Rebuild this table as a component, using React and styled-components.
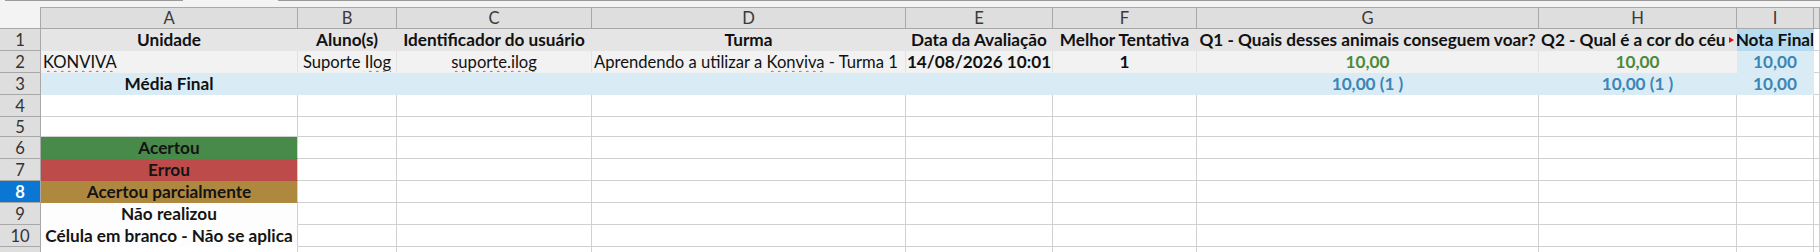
import React from "react";
import styled, { createGlobalStyle } from "styled-components";

const GlobalStyle = createGlobalStyle`
  html, body {
    margin: 0;
    padding: 0;
    background: #ffffff;
  }
`;

const COLS = [41, 257, 99, 195, 314, 147, 144, 342, 198, 77];
const ROWS = [22, 22, 22, 22, 22, 20, 22, 22, 22, 22, 22, 22];

const GRID = "#d0d0d0";
const HEAD_LINE = "#a8a8a8";
const FONT = `"Lato", "Liberation Sans", sans-serif`;

const Sheet = styled.div`
  width: 1820px;
  height: 252px;
  overflow: hidden;
  background: #ffffff;
  font-family: ${FONT};
  font-size: 16.6px;
  color: #111;
`;

const TopStrip = styled.div`
  height: 7px;
  background: #f3f3f3;
  display: grid;
  grid-template-columns: 5px 178px 95px 1fr;
`;

const StripLine = styled.div`
  height: 1px;
  background: ${(p) => (p.$on ? "#9a9a9a" : "transparent")};
`;

const Grid = styled.div`
  display: grid;
  grid-template-columns: ${COLS.map((c) => c + "px").join(" ")} 1fr;
  grid-template-rows: ${ROWS.map((r) => r + "px").join(" ")};
`;

const Corner = styled.div`
  background: #f3f3f3;
  border-right: 1px solid ${HEAD_LINE};
  border-bottom: 1px solid ${HEAD_LINE};
`;

const ColHead = styled.div`
  box-sizing: border-box;
  background: #dedede;
  border-top: 1px solid ${HEAD_LINE};
  border-right: 1px solid ${HEAD_LINE};
  border-bottom: 1px solid ${HEAD_LINE};
  display: flex;
  align-items: center;
  justify-content: center;
  color: #3a3a3a;
  font-size: 16.6px;
`;

const RowHead = styled.div`
  box-sizing: border-box;
  background: ${(p) => (p.$active ? "#0a77d4" : "#dedede")};
  color: ${(p) => (p.$active ? "#ffffff" : "#333333")};
  font-weight: ${(p) => (p.$active ? 700 : 400)};
  border-right: 1px solid ${HEAD_LINE};
  border-bottom: 1px solid ${HEAD_LINE};
  display: flex;
  align-items: center;
  justify-content: center;
  font-size: 16.6px;
`;

const Cell = styled.div`
  box-sizing: border-box;
  min-width: 0;
  background: ${(p) => p.$bg || "#ffffff"};
  border-right: 1px solid ${(p) => p.$vline || GRID};
  border-bottom: 1px solid ${(p) => p.$hline || GRID};
  display: flex;
  align-items: center;
  justify-content: ${(p) =>
    p.$align === "left" ? "flex-start" : p.$align === "right" ? "flex-end" : "center"};
  padding: 0 2px;
  overflow: hidden;
  white-space: nowrap;
  font-weight: ${(p) => (p.$bold ? 700 : 400)};
  font-size: ${(p) => (p.$bold ? "17.2px" : "16.6px")};
  color: ${(p) => p.$color || "#111111"};
`;

const Spell = styled.span`
  text-decoration-line: underline;
  text-decoration-style: wavy;
  text-decoration-color: #e8413c;
  text-decoration-thickness: 1.2px;
  text-underline-offset: 2px;
  text-decoration-skip-ink: none;
`;

const Label = styled.span`
  flex: 1;
  min-width: 0;
`;

// red marker drawn when a text runs past the cell edge
const ClipMark = styled.span`
  flex: none;
  width: 0;
  height: 0;
  margin-left: 2px;
  border-top: 3.5px solid transparent;
  border-bottom: 3.5px solid transparent;
  border-left: 5px solid #e01010;
`;

const GREEN = "#4b8a37";
const BLUE = "#3a86b6";
const HEAD_BG = "#e5e5e5";
const ROW2_BG = "#f2f2f2";
const SKY = "#d9ebf5";
const SKY_HEAD = "#b4dbef";

function Head({ children, bg = HEAD_BG, ...rest }) {
  return (
    <Cell $bg={bg} $hline={bg} $vline={bg} $bold {...rest}>
      {children}
    </Cell>
  );
}

function Plain({ children, ...rest }) {
  return <Cell $bg={ROW2_BG} $hline={ROW2_BG} $vline="#e2e2e2" {...rest}>{children}</Cell>;
}

function Sky({ children, ...rest }) {
  return (
    <Cell $bg={SKY} $hline={SKY} $vline={SKY} $bold $color={BLUE} {...rest}>
      {children}
    </Cell>
  );
}

const legend = [
  { label: "Acertou", bg: "#488a4a" },
  { label: "Errou", bg: "#bd4b49" },
  { label: "Acertou parcialmente", bg: "#ae883f" },
  { label: "Não realizou", bg: "#fdfdfd" },
  { label: "Célula em branco - Não se aplica", bg: "#fdfdfd" },
];

function EmptyRow({ from = 1 }) {
  return Array.from({ length: 11 - from }, (_, i) => <Cell key={i} />);
}

export default function App() {
  const letters = ["A", "B", "C", "D", "E", "F", "G", "H", "I", ""];
  return (
    <>
      <GlobalStyle />
      <Sheet>
        <TopStrip>
          <StripLine />
          <StripLine $on />
          <StripLine />
          <StripLine $on />
        </TopStrip>
        <Grid>
          <Corner />
          {letters.map((l, i) => (
            <ColHead key={i}>{l}</ColHead>
          ))}

          <RowHead>1</RowHead>
          <Head>Unidade</Head>
          <Head>Aluno(s)</Head>
          <Head>Identificador do usuário</Head>
          <Head>Turma</Head>
          <Head>Data da Avaliação</Head>
          <Head>Melhor Tentativa</Head>
          <Head>Q1 - Quais desses animais conseguem voar?</Head>
          <Head $align="left">
            <Label>Q2 - Qual é a cor do céu</Label>
            <ClipMark />
          </Head>
          <Head bg={SKY_HEAD}>Nota Final</Head>
          <Cell />

          <RowHead>2</RowHead>
          <Plain $align="left">
            <Spell>KONVIVA</Spell>
          </Plain>
          <Plain>
            Suporte&nbsp;<Spell>Ilog</Spell>
          </Plain>
          <Plain>
            <Spell>suporte.ilog</Spell>
          </Plain>
          <Plain $align="left">
            Aprendendo a utilizar a&nbsp;<Spell>Konviva</Spell>&nbsp;- Turma 1
          </Plain>
          <Plain $bold>14/08/2026 10:01</Plain>
          <Plain $bold>1</Plain>
          <Plain $bold $color={GREEN}>10,00</Plain>
          <Plain $bold $color={GREEN} $vline={ROW2_BG}>10,00</Plain>
          <Sky>10,00</Sky>
          <Cell />

          <RowHead>3</RowHead>
          <Sky $color="#111111">Média Final</Sky>
          <Sky />
          <Sky />
          <Sky />
          <Sky />
          <Sky />
          <Sky>10,00 (1 )</Sky>
          <Sky>10,00 (1 )</Sky>
          <Sky>10,00</Sky>
          <Cell />

          <RowHead>4</RowHead>
          <EmptyRow />
          <RowHead>5</RowHead>
          <EmptyRow />

          {legend.map((row, i) => (
            <React.Fragment key={row.label}>
              <RowHead $active={i === 2}>{i + 6}</RowHead>
              <Cell $bg={row.bg} $hline={row.bg} $bold $color="#141414">
                {row.label}
              </Cell>
              <EmptyRow from={2} />
            </React.Fragment>
          ))}

          <RowHead />
          <EmptyRow />
        </Grid>
      </Sheet>
    </>
  );
}
